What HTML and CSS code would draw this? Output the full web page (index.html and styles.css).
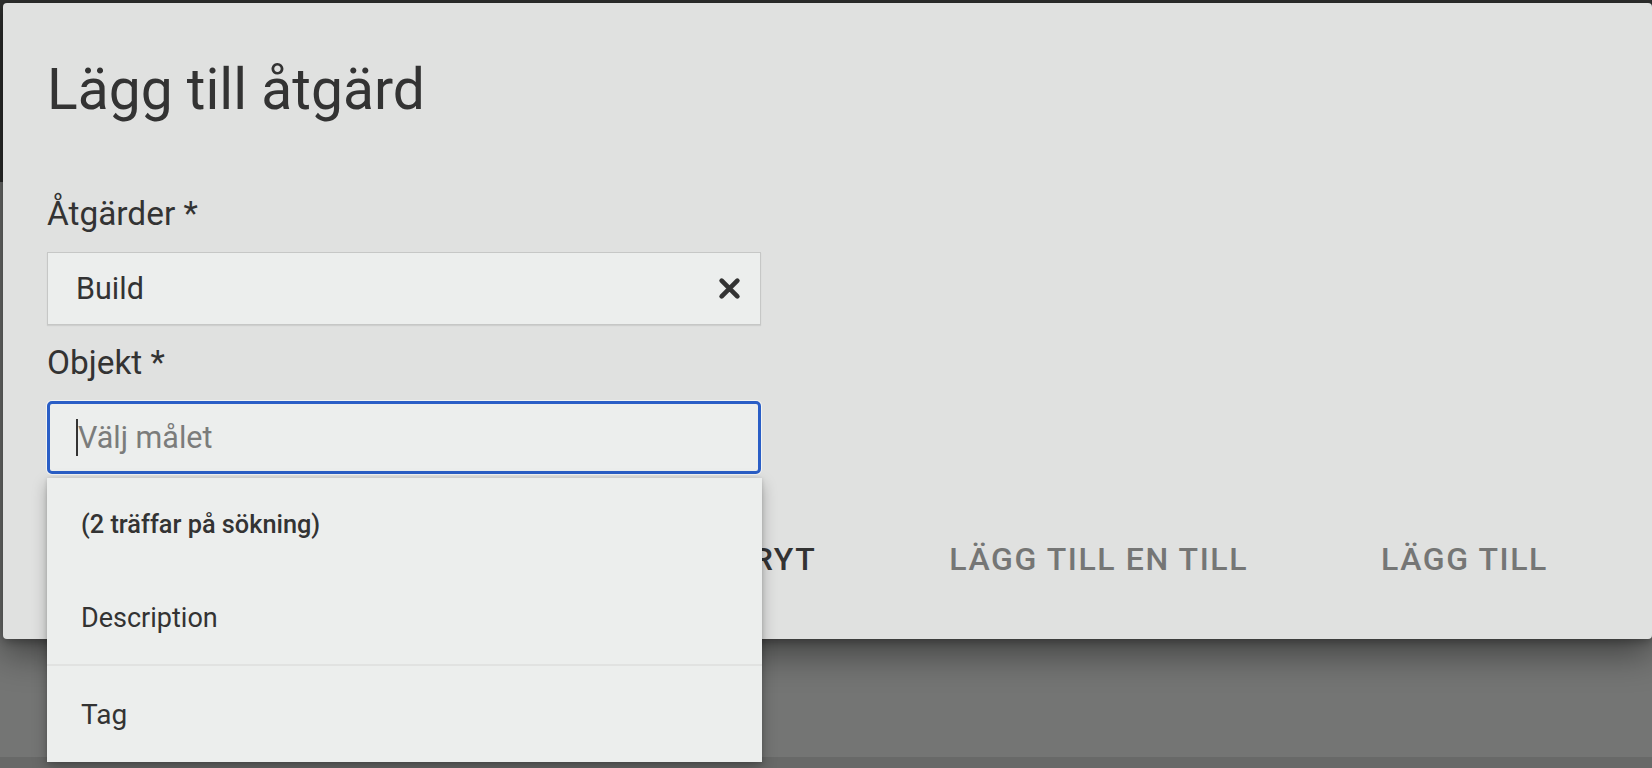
FILE: index.html
```html
<!DOCTYPE html>
<html lang="sv">
<head>
<meta charset="utf-8">
<title>Lägg till åtgärd</title>
<link rel="stylesheet" href="styles.css">
</head>
<body>
<div class="page">
  <div class="appbar"></div>
  <div class="content"></div>
  <div class="footer"></div>
</div>
<div class="dialog" role="dialog">
  <h1 class="title">Lägg till åtgärd</h1>
  <div class="field field-first">
    <div class="label">Åtgärder *</div>
    <div class="select">
      <span class="value">Build</span>
      <svg class="clear" width="23" height="23" viewBox="0 0 22 22"><path d="M3.5 3.5 L18.5 18.5 M18.5 3.5 L3.5 18.5" stroke="#333" stroke-width="4.5" stroke-linecap="round" fill="none"/></svg>
    </div>
  </div>
  <div class="field field-second">
    <div class="label">Objekt *</div>
    <div class="select select-focus">
      <span class="caret"></span><span class="placeholder">Välj målet</span>
    </div>
    <div class="menu">
      <div class="menu-item menu-count">(2 träffar på sökning)</div>
      <div class="menu-item">Description</div>
      <div class="menu-divider"></div>
      <div class="menu-item menu-last">Tag</div>
    </div>
  </div>
  <div class="actions">
    <span class="btn btn-primary">Avbryt</span>
    <span class="btn btn-disabled">Lägg till en till</span>
    <span class="btn btn-disabled">Lägg till</span>
  </div>
</div>
</body>
</html>
```
FILE: styles.css
```css
html, body {
  margin: 0;
  padding: 0;
}
body {
  width: 1652px;
  height: 768px;
  overflow: hidden;
  position: relative;
  font-family: Roboto, "Noto Sans", "Liberation Sans", sans-serif;
  color: #333;
  background: #747574;
}
.page {
  display: flex;
  flex-direction: column;
  height: 768px;
}
.appbar {
  height: 182px;
  background: #2f302f;
}
.content {
  flex: 1;
  background: #747574;
}
.footer {
  height: 11px;
  background: #686968;
}
.dialog {
  position: absolute;
  left: 3px;
  top: 3px;
  width: 1649px;
  height: 636px;
  box-sizing: border-box;
  padding: 53px 45px 0 44px;
  background: #e0e1e0;
  border-radius: 4px;
  box-shadow: 0 14px 36px rgba(0, 0, 0, 0.45), 0 3px 8px rgba(0, 0, 0, 0.25);
}
.title {
  margin: 0;
  font-size: 57px;
  line-height: 67px;
  font-weight: 400;
  color: #333;
}
.field {
  position: relative;
  width: 714px;
}
.field-first {
  margin-top: 72px;
}
.field-second {
  margin-top: 19px;
}
.label {
  font-size: 33.4px;
  line-height: 38px;
  color: #333;
  margin-bottom: 19px;
}
.select {
  height: 73px;
  box-sizing: border-box;
  border: 1px solid #c6c7c6;
  background: #eceeed;
  display: flex;
  align-items: center;
  padding: 0 19px 0 28px;
  box-shadow: 0 1px 1px rgba(0, 0, 0, 0.08);
}
.value {
  flex: 1;
  font-size: 30.5px;
  color: #333;
}
.clear {
  display: block;
}
.select-focus {
  border: 3px solid #2a5ec6;
  border-radius: 5px;
  padding-left: 26px;
  box-shadow: 0 0 0 1px #f3f4f3;
}
.caret {
  width: 2px;
  height: 37px;
  background: #333;
}
.placeholder {
  font-size: 30.5px;
  color: #7b7c7b;
}
.menu {
  position: absolute;
  left: 0;
  right: -1px;
  top: calc(100% + 4px);
  background: #eceeed;
  box-shadow: 0 6px 14px rgba(0, 0, 0, 0.28), 0 1px 4px rgba(0, 0, 0, 0.15);
  z-index: 2;
}
.menu-item {
  height: 93px;
  display: flex;
  align-items: center;
  padding-left: 34px;
  font-size: 27px;
  color: #333;
}
.menu-count {
  font-size: 25.3px;
  font-weight: 500;
}
.menu-divider {
  height: 2px;
  background: #e1e2e1;
}
.menu-last {
  height: 96px;
  font-size: 28px;
}
.actions {
  display: flex;
  justify-content: flex-end;
  gap: 85px;
  margin-top: 51px;
  padding-right: 35px;
}
.btn {
  padding: 16px 24px;
  font-size: 32px;
  line-height: 36px;
  font-weight: 500;
  letter-spacing: 1.6px;
  text-transform: uppercase;
}
.btn-primary {
  color: #333;
}
.btn-disabled {
  color: #757675;
}
```
